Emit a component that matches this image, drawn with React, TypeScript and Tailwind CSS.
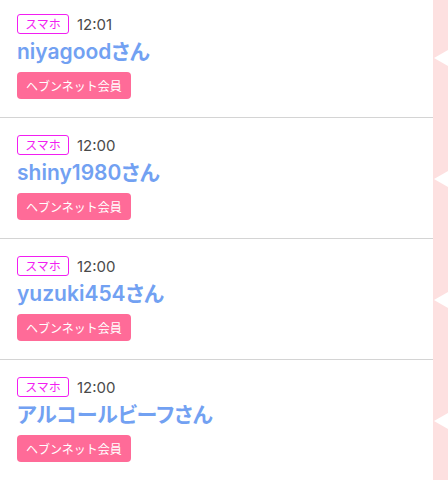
const rows = [
  { time: '12:01', name: 'niyagoodさん' },
  { time: '12:00', name: 'shiny1980さん' },
  { time: '12:00', name: 'yuzuki454さん' },
  { time: '12:00', name: 'アルコールビーフさん' },
];

function VisitRow({ time, name }: { time: string; name: string }) {
  return (
    <div className="flex">
      <div className="flex-1 border-b border-[#d4d4d4] pl-[17px] pt-[17px] pb-[18px]">
        <div className="flex items-center gap-2">
          <span className="w-[52px] h-[20px] flex items-center justify-center rounded-[3px] border border-[#f21ef2] text-[12px] leading-none text-[#f21ef2]">
            スマホ
          </span>
          <span className="font-['Inter','Noto_Sans_CJK_JP',sans-serif] text-[15px] leading-none text-[#4a4a4a]">{time}</span>
        </div>
        <div className="mt-1 font-['Inter','Noto_Sans_CJK_JP',sans-serif] [font-feature-settings:'palt'] text-[21px] leading-[28px] font-semibold text-[#72a1f2]">
          {name}
        </div>
        <div className="mt-1.5 w-[114px] h-[27px] flex items-center justify-center rounded-[4px] bg-[#ff6b98] text-[12px] leading-none text-white">
          ヘブンネット会員
        </div>
      </div>
      <div className="w-[15px] bg-[#fde0e0] flex items-center justify-end">
        <div className="w-0 h-0 border-y-[8px] border-y-transparent border-r-[14px] border-r-white" />
      </div>
    </div>
  );
}

export default function App() {
  return (
    <div className="h-[480px] overflow-hidden bg-white font-['Noto_Sans_CJK_JP',sans-serif]">
      <div className="-mt-[3px]">
        {rows.map((r, i) => (
          <VisitRow key={i} time={r.time} name={r.name} />
        ))}
      </div>
    </div>
  );
}
